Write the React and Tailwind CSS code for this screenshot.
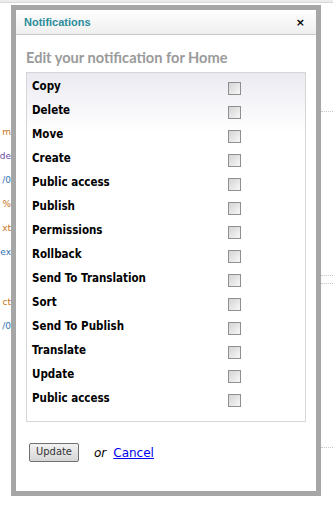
import { useState } from 'react';

const actions = [
  'Copy',
  'Delete',
  'Move',
  'Create',
  'Public access',
  'Publish',
  'Permissions',
  'Rollback',
  'Send To Translation',
  'Sort',
  'Send To Publish',
  'Translate',
  'Update',
  'Public access',
];

// bits of the page behind the dialog that peek out on the left edge
const peek = [
  { top: 'mt-[124px]', text: 'm', color: 'text-[#c8741a]' },
  { top: 'mt-[13px]', text: 'de', color: 'text-[#6a4aa0]' },
  { top: 'mt-[13px]', text: '/0', color: 'text-[#2d6fb0]' },
  { top: 'mt-[13px]', text: '%', color: 'text-[#c8741a]' },
  { top: 'mt-[13px]', text: 'xt', color: 'text-[#c8741a]' },
  { top: 'mt-[13px]', text: 'ex', color: 'text-[#2d6fb0]' },
  { top: 'mt-[39px]', text: 'ct', color: 'text-[#c8741a]' },
  { top: 'mt-[13px]', text: '/0', color: 'text-[#2d6fb0]' },
];

function Checkbox({ checked, onChange }) {
  return (
    <button
      type="button"
      onClick={onChange}
      className="w-[13px] h-[13px] border border-[#8f8f8f] bg-gradient-to-br from-[#d4d4d4] to-[#f7f7f7] flex items-center justify-center p-0"
    >
      {checked && (
        <svg width="9" height="9" viewBox="0 0 9 9">
          <path d="M1 4.5 L3.5 7 L8 1.5" stroke="#333" strokeWidth="1.6" fill="none" />
        </svg>
      )}
    </button>
  );
}

export default function App() {
  const [checked, setChecked] = useState(actions.map(() => false));

  const toggle = (i) => setChecked(checked.map((c, j) => (j === i ? !c : c)));

  return (
    <div className="relative w-[333px] h-[505px] overflow-hidden bg-white font-['DejaVu_Sans',sans-serif]">
      {/* page behind */}
      <div className="h-[3px] bg-[#ececec] border-b border-[#d8d8d8]" />
      <div className="flex flex-col w-[11px] text-[9px] leading-[11px]">
        {peek.map((p, i) => (
          <div key={i} className={`flex justify-end whitespace-nowrap ${p.top} ${p.color}`}>
            {p.text}
          </div>
        ))}
      </div>
      <div className="absolute right-0 top-[108px] w-[12px] h-[4px] border-b border-dotted border-[#c8c8c8]" />
      <div className="absolute right-0 top-[270px] w-[12px] h-[6px] border-b border-dotted border-[#c8c8c8]" />
      <div className="absolute right-0 top-[278px] w-[12px] h-[6px] border-b border-dotted border-[#c8c8c8]" />
      <div className="absolute right-0 top-[444px] w-[12px] h-[4px] border-b border-dotted border-[#c8c8c8]" />

      {/* dialog */}
      <div className="absolute left-[11px] top-[5px] w-[310px] h-[491px] border-[5px] border-[#a6a6a6] bg-white flex flex-col">
        <div className="h-[25px] flex items-center justify-between pl-[8px] pr-[11px] bg-gradient-to-b from-white to-[#efefef] border-b border-[#c9c9c9]">
          <span className="text-[11px] font-bold text-[#2b8c9b] font-['Liberation_Sans',sans-serif]">Notifications</span>
          <button type="button" className="text-[11px] font-bold text-black leading-none">×</button>
        </div>

        <div className="px-[10px] pt-[14px] flex flex-col">
          <h2 className="text-[14.6px] font-bold text-[#9a9a9a] leading-[18px] mb-[5px] font-['Lato',sans-serif]">
            Edit your notification for Home
          </h2>
          <div className="border border-[#d6d6d6] bg-gradient-to-b from-[#ebeaf2] to-white to-[60px] pt-[6px] pb-[6px]">
            {actions.map((a, i) => (
              <div key={i} className="h-[24px] flex items-start pl-[5px]">
                <span className="w-[196px] text-[11.5px] leading-[14px] text-black font-['DejaVu_Sans_Condensed',sans-serif] font-semibold">{a}</span>
                <div className="pt-[3px]">
                  <Checkbox checked={checked[i]} onChange={() => toggle(i)} />
                </div>
              </div>
            ))}
          </div>
        </div>

        <div className="flex items-center pl-[13px] mt-[21px] text-[12px]">
          <button
            type="button"
            className="w-[50px] h-[19px] border border-[#707070] rounded-[2px] bg-gradient-to-b from-[#f2f2f2] to-[#d6d6d6] text-[11px] text-[#333] font-['DejaVu_Sans_Condensed',sans-serif]"
          >
            Update
          </button>
          <span className="ml-[15px] italic text-black">or</span>
          <a href="#" className="ml-[7px] text-[#0000ee] underline">Cancel</a>
        </div>
      </div>
    </div>
  );
}
